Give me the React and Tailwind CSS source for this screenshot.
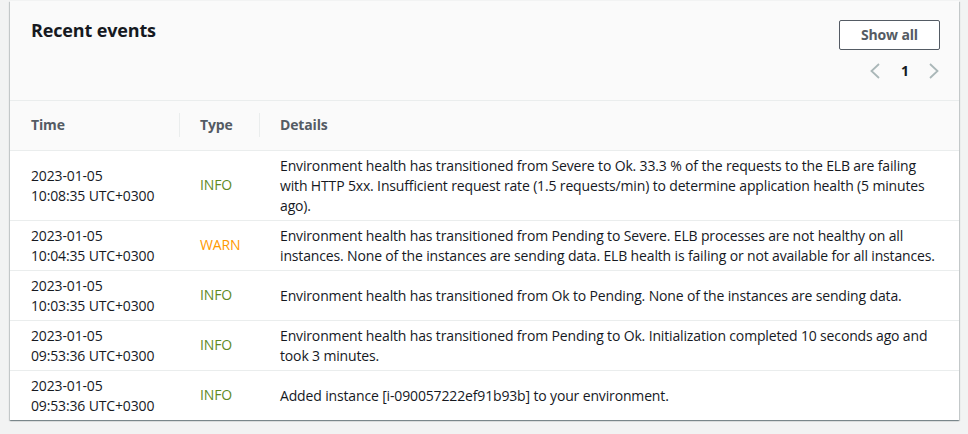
const EVENTS = [
  {
    date: "2023-01-05",
    time: "10:08:35 UTC+0300",
    type: "INFO",
    details:
      "Environment health has transitioned from Severe to Ok. 33.3 % of the requests to the ELB are failing with HTTP 5xx. Insufficient request rate (1.5 requests/min) to determine application health (5 minutes ago).",
  },
  {
    date: "2023-01-05",
    time: "10:04:35 UTC+0300",
    type: "WARN",
    details:
      "Environment health has transitioned from Pending to Severe. ELB processes are not healthy on all instances. None of the instances are sending data. ELB health is failing or not available for all instances.",
  },
  {
    date: "2023-01-05",
    time: "10:03:35 UTC+0300",
    type: "INFO",
    details:
      "Environment health has transitioned from Ok to Pending. None of the instances are sending data.",
  },
  {
    date: "2023-01-05",
    time: "09:53:36 UTC+0300",
    type: "INFO",
    details:
      "Environment health has transitioned from Pending to Ok. Initialization completed 10 seconds ago and took 3 minutes.",
  },
  {
    date: "2023-01-05",
    time: "09:53:36 UTC+0300",
    type: "INFO",
    details: "Added instance [i-090057222ef91b93b] to your environment.",
  },
];

const TYPE_COLORS = {
  INFO: "text-[#5f8a1f]",
  WARN: "text-[#ff9900]",
};

function Chevron({ dir }) {
  return (
    <svg width="10" height="16" viewBox="0 0 10 16" fill="none" stroke="#aab7b8" strokeWidth="1.8">
      {dir === "left" ? <polyline points="9,1 1.5,8 9,15" /> : <polyline points="1,1 8.5,8 1,15" />}
    </svg>
  );
}

export default function App() {
  return (
    <div className="min-h-[434px] bg-[#f2f3f3] pl-[10px] pr-[9px] pt-px font-['Open_Sans',sans-serif] text-[14px] leading-5 tracking-[-0.15px] text-[#16191f]">
      <div className="bg-white shadow-[0_1px_1px_0_rgba(0,28,36,0.3),1px_1px_1px_0_rgba(0,28,36,0.15),-1px_1px_1px_0_rgba(0,28,36,0.15)]">
        {/* Header */}
        <div className="flex justify-between border-b border-[#eaeded] bg-[#fafafa] pl-[21px] pr-[19px] pt-[19px] h-[100px]">
          <h2 className="text-[18px] font-bold leading-[22px] text-[#16191f] mt-[-1px]">Recent events</h2>
          <div className="flex flex-col items-end">
            <button className="h-[30px] w-[101px] rounded-[2px] border border-[#545b64] bg-white text-[14px] font-bold text-[#545b64]">
              Show all
            </button>
            <div className="mt-[11px] flex items-center gap-[21px] pr-px text-[#16191f]">
              <Chevron dir="left" />
              <span className="w-[7px] text-center font-bold">1</span>
              <Chevron dir="right" />
            </div>
          </div>
        </div>

        {/* Table */}
        <table className="w-full border-collapse">
          <thead>
            <tr className="h-[49px] bg-[#fafafa] text-left font-bold text-[#545b64]">
              <th className="w-[169px] pl-[21px]">Time</th>
              <th className="w-[80px] pl-[21px]">
                <div className="border-l border-[#eaeded] -ml-[21px] pl-[20px] py-[2px]">Type</div>
              </th>
              <th className="pl-[21px]">
                <div className="border-l border-[#eaeded] -ml-[21px] pl-[20px] py-[2px]">Details</div>
              </th>
            </tr>
          </thead>
          <tbody>
            {EVENTS.map((e, i) => (
              <tr key={i} className="border-t border-[#eaeded]">
                <td className="pl-[21px] pt-[5px] pb-[4px] align-middle">
                  <div>{e.date}</div>
                  <div>{e.time}</div>
                </td>
                <td className={`pl-[21px] align-middle ${TYPE_COLORS[e.type]}`}>{e.type}</td>
                <td className="pl-[21px] pr-[20px] pt-[5px] pb-[4px] align-middle">{e.details}</td>
              </tr>
            ))}
          </tbody>
        </table>
      </div>
    </div>
  );
}
